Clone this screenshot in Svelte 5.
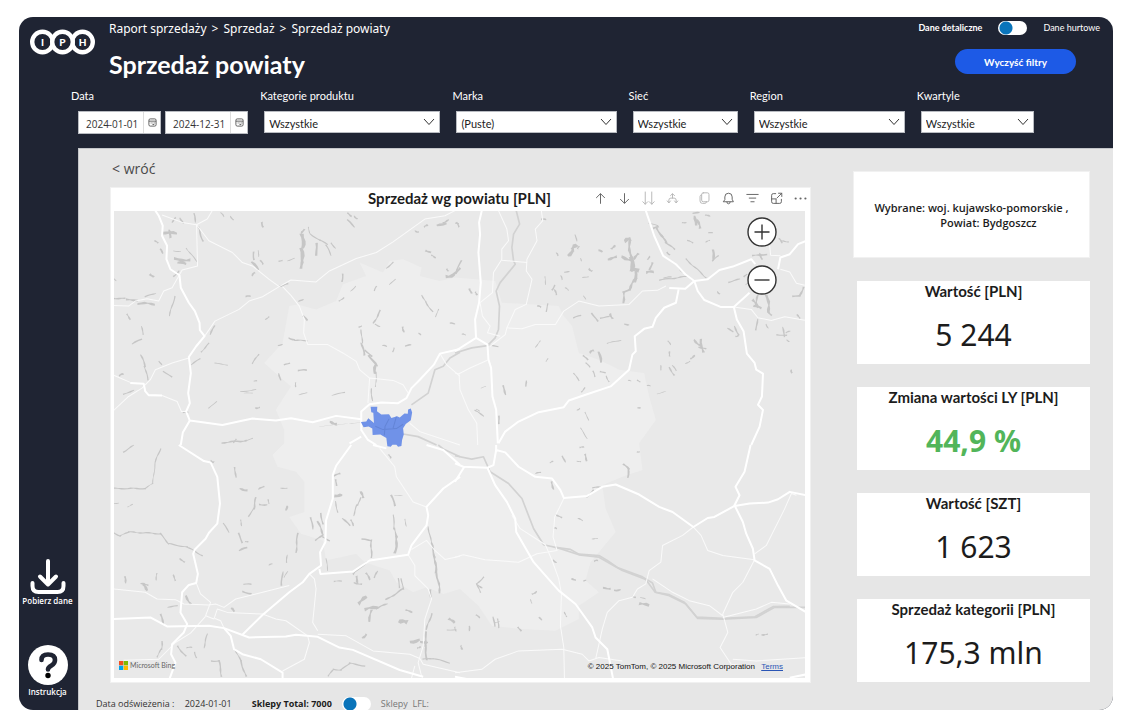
<script>
  const filters = [
    { id: 'category', label: 'Kategorie produktu', value: 'Wszystkie' },
    { id: 'brand', label: 'Marka', value: '(Puste)' },
    { id: 'chain', label: 'Sieć', value: 'Wszystkie' },
    { id: 'region', label: 'Region', value: 'Wszystkie' },
    { id: 'quarter', label: 'Kwartyle', value: 'Wszystkie' }
  ];

  const dates = [
    { id: 'from', label: 'Data od', value: '2024-01-01' },
    { id: 'to', label: 'Data do', value: '2024-12-31' }
  ];

  const kpis = [
    { label: 'Wartość [PLN]', value: '5 244' },
    { label: 'Zmiana wartości LY [PLN]', value: '44,9 %', up: true },
    { label: 'Wartość [SZT]', value: '1 623' },
    { label: 'Sprzedaż kategorii [PLN]', value: '175,3 mln' }
  ];

  const tools = [
    { name: 'Drąż w górę', d: 'M8 14V2.500M3 7l5-5 5 5' },
    { name: 'Drąż w dół', d: 'M8 2v11.500M3 9l5 5 5-5' },
    { name: 'Następny poziom', d: 'M4 0v15M1 12l3 3 3-3M12 0v15M9 12l3 3 3-3', faint: true },
    { name: 'Rozwiń poziom', d: 'M8 2.500v5M3.500 13v-3q0-2.500 2.500-2.500h4q2.500 0 2.500 2.500v3M5.500 4.500L8 2l2.500 2.500M1.500 11l2 2.500 2-2.500M10.500 11l2 2.500 2-2.500', faint: true },
    { name: 'Kopiuj', d: 'M6.500 1h5q2 0 2 2v7q0 2-2 2h-5q-2 0-2-2V3q0-2 2-2zM4.500 3.500Q2.500 3.500 2.500 5.500V11q0 3 3 3h3q2 0 2-2', faint: true, gap: true },
    { name: 'Alert', d: 'M2 12h12l-1.500-3V6a4.500 4.500 0 0 0-9 0v3zM6 12.500a2 2 0 0 0 4 0' },
    { name: 'Filtry', d: 'M1 3h14M4 7.500h8M6 12h4' },
    { name: 'Tryb koncentracji uwagi', d: 'M7 2H4Q2 2 2 4v8q0 2 2 2h8q2 0 2-2V9M2 8.500h5.500V14M8.500 7.500L14.500 1.500M10.500 1.500h4v4' },
    { name: 'Więcej opcji', d: 'M2 8h.1M8 8h.1M14 8h.1', bold: true }
  ];

  /* The map is drawn as four tiles; each one carries its own offset. */
  const tiles = [
    {
      x: 0, y: 0,
      major: [
        'M140 5L150 20 162 50 160 80 175 110 173 150 185 180 212 198 216 235 240 280 258 305 272 340 273 362 287 380 262 410 240 442 246 490 238 550 243 580 232 605 243 632 340 645 430 626 500 632 545 625 610 637 680 618 755 628',
        'M65 520L105 522 110 545 120 556 160 557',
        'M1050 418L990 432 972 465 930 510 905 535 890 565 865 580 815 578 780 583 755 605 755 660 775 690 800 705M755 680L720 700',
        'M243 632L222 668 216 705'
      ],
      minor: [
        'M160 18L220 40 263 47 295 30 310 5M263 47L266 170 220 182 190 235 165 245 150 275 115 268 80 275 60 290 12 288',
        'M263 47L300 95 370 130 400 160 430 170 455 190 480 210 510 232 545 212 620 218 660 185 740 148 800 130 850 98 945 30 1005 20 1035 5',
        'M510 232L460 262 420 275 390 300 318 335 287 380M520 232L545 258 570 290 585 330 583 370 595 405 655 405 700 430 740 455 750 480 780 505 775 580M780 505L850 512 880 525 895 550',
        'M240 445L190 460 140 480 125 510 100 535 60 560 12 605M12 495L65 518M160 557L205 575 218 605 235 605M990 432L1010 465 1050 500M900 640L930 665 1050 705'
      ],
      river: ['M1050 428L1020 445 1000 470 975 480 955 550 905 585M880 672L925 680 980 705'],
      lakes: [
        [165,70,200,74,9],[180,66,186,82,8],[200,150,240,152,9],[210,160,228,164,8],[233,118,265,158,3],[195,125,215,127,3],[155,122,162,130,6],[140,95,146,101,5],
        [255,15,260,38,5],[268,55,282,95,5],[215,28,222,42,5],[190,38,200,28,5],[127,196,132,202,7],[195,200,210,186,5],[13,266,48,268,5],[55,272,85,272,6],[90,282,135,284,7],[110,262,140,252,4],[13,203,22,214,3],
        [55,316,65,328,5],[198,262,182,318,4],[98,352,104,374,4],[72,402,98,390,5],[97,437,110,470,5],[108,470,118,510,4],[305,374,316,350,5],[277,426,300,402,4],[248,465,273,448,4],[318,461,355,466,3],[430,461,448,435,4],
        [433,130,435,150,5],[430,160,445,180,8],[430,198,436,192,6],[448,125,448,142,3],[458,42,462,52,6],[455,155,460,164,5],[336,12,344,22,4],[365,22,372,32,4],[510,155,518,155,4],[535,154,555,148,3],
        [580,80,580,112,12],[575,122,578,148,12],[576,154,577,174,9],[598,55,600,72,3],[603,75,632,94,4],[632,94,654,105,4],[650,108,665,138,4],[665,103,678,116,4],[620,105,622,136,7],[583,62,578,72,6],
        [715,14,725,20,5],[714,34,734,52,5],[735,22,742,28,5],[917,66,925,68,5],[945,52,952,50,6],[985,50,1005,42,8],[1000,40,1015,34,5],[1040,42,1046,52,5],[950,124,960,130,6],[966,140,976,144,5],
        [700,196,697,215,5],[723,245,738,232,3],[830,176,850,160,4],[795,243,800,232,4],[840,226,856,210,3],[690,275,702,265,4],[1012,200,1030,198,10],[1030,195,1048,178,7],[1012,180,1014,184,5],
        [937,258,948,278,4],[948,280,968,306,4],[812,304,792,340,5],[797,345,810,350,4],[985,300,978,322,3],[1022,342,1033,342,5],[880,354,882,366,6],[928,373,932,374,5],[888,408,902,407,5],[820,408,830,410,4],
        [748,352,755,350,4],[755,362,758,400,4],[756,402,764,435,6],[768,422,785,440,5],[780,438,800,468,7],[798,468,796,488,9],[800,488,798,530,3],[785,538,788,572,4],[852,416,850,426,4],
        [540,386,555,390,5],[556,393,592,393,4],[508,408,518,404,4],[470,330,478,322,4],[526,466,540,460,4],[568,482,590,482,5],[510,493,513,510,5],[165,485,188,502,4],[152,455,158,465,4],[35,498,42,493,6],
        [395,546,440,540,3],[405,550,430,550,2],[436,514,442,514,4],[300,595,322,575,3],[558,520,560,530,4],[570,556,592,548,3],[668,556,705,548,3],[665,638,678,640,9],[630,650,752,638,1],[45,552,75,543,4],[582,322,593,330,6],[440,594,450,593,5],
        [340,698,410,692,5],[410,692,430,686,3],[375,698,380,688,4],[570,276,580,270,5],[510,230,535,224,5],[412,262,422,260,5],[225,608,235,606,6]
      ]
    },
    {
      x: 1035, y: 0,
      major: [
        'M80 5L72 40 75 75 70 130 77 220 72 280 60 330 63 385 0 425M63 385L97 405 100 450 108 475 112 560 123 600 128 700',
        'M570 5L582 40 595 80 622 140 660 165 688 195 715 215 725 245 745 272 795 293 833 293 880 250',
        'M640 236L688 238 715 215 755 210 790 182 830 172 885 150 897 165M965 180L972 145 1000 135 1025 105 1050 95',
        'M833 293L842 330 862 365 872 432 895 460 900 480 920 492 917 560 905 585 920 600 910 650 885 705',
        'M668 240L660 280 625 295 600 325 590 352 565 358 537 380 540 425 530 435 520 480 465 530 390 555 340 572 325 592 250 607 190 635 150 665 130 700'
      ],
      minor: [
        'M130 5L155 60 160 95 140 120 140 150 115 190 112 250 75 280 82 320 105 350 97 370 135 380M140 153L215 160M258 5L262 35 240 60 245 95 215 150 213 185 230 210 213 285 180 300 155 355 200 358 240 345 300 345 325 305 370 275 430 290 520 285 560 245 605 243 630 230',
        'M155 355L150 375 105 410M97 452L45 475 12 492 15 540 40 600 65 640 68 705M0 490L12 492M833 293L885 300 905 325 945 333 985 322 1050 333M940 110L943 138 972 140M972 180L1000 188 1020 222 1045 228'
      ],
      river: ['M183 5L193 45 175 75 170 115 175 155 180 165 135 220 123 245 133 290 130 360 120 385 97 408 50 415 0 430'],
      lakes: [
        [360,78,363,95,4],[355,118,360,112,13],[340,135,350,128,11],[368,118,370,113,5],[304,132,306,138,5],[512,95,520,92,12],[520,95,525,140,8],[502,145,525,150,10],[525,150,530,180,14],[530,180,543,185,12],[538,188,540,215,9],[540,208,522,238,8],[520,240,505,250,6],[505,250,502,278,7],
        [538,148,545,135,8],[460,148,480,145,8],[470,118,475,110,7],[432,125,438,125,7],[575,190,590,188,8],[583,180,588,162,6],[577,150,580,142,5],[402,180,408,184,6],[382,205,398,202,3],[328,188,340,188,4],[375,150,378,154,4],[18,155,3,192,5],
        [268,203,271,225,3],[290,240,298,230,5],[298,242,302,255,5],[320,210,316,200,4],[330,236,338,242,4],[45,240,48,250,6],[62,250,66,254,6],[278,284,272,305,4],[248,290,255,293,5],[385,260,390,270,3],
        [612,212,690,202,4],[625,206,645,203,4],[595,58,605,52,6],[603,58,620,82,6],[618,80,630,100,6],[630,100,655,120,5],[635,130,640,136,5],[690,150,750,205,4],[665,172,680,188,5],[580,42,605,50,3],
        [712,12,728,12,5],[718,25,718,45,9],[725,35,730,55,8],[680,40,690,42,4],[750,18,760,22,5],[695,95,710,100,4],[758,72,768,70,4],[750,98,760,95,4],[770,125,772,150,8],[770,155,786,140,4],[890,140,930,135,5],[910,135,918,148,6],[970,90,975,100,6],[980,95,995,98,4],
        [865,202,870,196,5],[818,218,850,210,4],[785,248,790,252,5],[870,225,880,222,4],[890,275,905,290,8],[905,258,900,285,6],[895,290,912,296,7],[932,260,938,305,9],[935,308,945,315,6],[1010,262,1030,258,5],[1030,258,1040,235,6],[1022,318,1030,325,5],
        [903,330,900,360,5],[930,345,935,355,4],[978,355,985,380,5],[962,375,990,378,4],[990,370,1000,365,4],[992,392,998,395,4],[815,358,830,365,5],[835,352,848,375,5],[845,378,840,380,5],[716,393,730,405,7],[735,392,740,425,8],[730,412,748,418,5],[637,395,643,405,4],[642,428,640,438,5],
        [690,462,700,455,4],[705,445,715,440,6],[614,468,616,480,4],[640,475,655,495,5],[650,468,660,482,4],[1004,484,1006,486,7],[604,552,630,545,2],[548,593,552,595,5],[545,513,552,515,4],[518,512,525,514,3],[575,528,582,528,4],
        [455,401,495,392,3],[465,315,470,325,7],[435,325,460,322,4],[410,312,425,335,5],[355,325,375,318,4],[508,345,518,345,5],[405,428,412,424,7],[430,430,435,455,8],[385,438,395,450,5],[392,460,402,472,4],[355,492,370,512,4],[412,485,418,500,4],[435,485,448,490,4],[378,545,388,535,4],[452,500,460,515,4],
        [240,412,255,395,3],[272,454,278,448,3],[212,515,213,528,5],[143,530,152,552,6],[60,602,85,618,4],[65,598,72,604,3],[78,535,92,530,2],[130,620,132,640,5],[375,655,395,685,3],[388,608,400,630,3],[365,600,372,597,4],[22,374,30,376,4],[105,408,128,410,4],[260,30,270,32,5],[2,42,10,44,3]
      ]
    },
    {
      x: 0, y: 705,
      major: [
        'M210 0L285 48 305 52 325 95 333 175 325 235 300 262 290 280 258 312 253 325 267 385 262 412 240 418 220 440 215 500 235 535 225 560 190 595 187 625 200 650 183 697',
        'M12 520L125 515 175 542 300 540 345 547 420 575 530 572 560 567 625 573 690 605 730 612 870 672 940 692',
        'M725 0L680 62 670 90 670 160 650 225 648 290 632 320 635 360 600 385 580 410 540 440 460 508 400 567',
        'M345 547L365 570 375 610 400 625 455 640 520 680 520 697M630 370L633 385 730 378 780 345 895 328 905 300 950 240 955 210 950 185 1000 130 1050 95M790 0L830 10M950 0L1000 15 1050 60'
      ],
      minor: [
        'M12 430L110 440 145 460 200 462 225 475 300 478 320 475 345 485 380 460 440 445 540 420M262 412L275 445 305 470 290 510 315 520 325 490 355 500 460 505 500 520 530 525 595 570 600 590 585 640 520 675',
        'M318 518L335 525 345 547M290 512L245 562 200 590 150 640 45 643M600 385L615 400 620 430 610 530 625 555M625 565L710 570 790 615 900 625 930 638 940 655 1050 680',
        'M810 10L855 65 860 95 910 170 950 185M895 328L915 360 915 390 955 430 965 460 945 520 940 600 925 650 935 690M905 312L950 285 975 315 1005 342 1050 332M915 660L905 697'
      ],
      river: ['M1050 35L1000 12 985 0'],
      lakes: [
        [45,20,75,2,4],[155,12,140,50,4],[140,50,132,115,3],[132,115,110,130,3],[110,130,12,130,4],[12,260,35,272,4],[35,272,60,260,4],[60,260,155,265,4],[155,265,180,295,4],[180,295,235,305,4],[235,305,280,330,4],
        [12,175,30,173,3],[58,184,72,178,3],[378,68,380,95,5],[395,132,412,134,7],[450,132,463,124,5],[515,129,533,129,3],[452,178,472,178,5],[440,158,435,190,5],[435,190,418,212,4],[532,185,532,192,7],[476,164,480,173,4],
        [343,235,360,260,4],[388,265,400,290,5],[394,225,398,240,4],[410,288,416,290,4],[392,314,412,308,6],[565,265,560,320,5],[534,330,532,350,4],[480,358,488,356,4],[308,48,312,50,7],[605,218,610,250,5],[625,230,640,265,6],[635,205,640,235,5],
        [620,285,640,268,5],[640,275,660,285,4],[676,92,690,85,5],[680,105,680,120,5],[680,150,693,152,10],[678,170,685,200,4],[756,142,758,155,8],[752,158,745,180,4],[742,180,732,210,4],[700,220,720,240,5],[725,225,730,240,5],
        [845,152,855,180,6],[855,150,878,150,2],[885,222,890,242,3],[851,210,853,250,4],[853,250,862,275,5],[862,275,856,320,8],[758,282,785,285,5],[785,285,785,335,5],[838,30,842,38,5],[215,340,225,350,5],[145,385,142,402,4],[193,390,200,403,5],[48,395,52,410,6],[105,420,115,430,9],[98,415,117,418,5],
        [178,484,205,481,4],[232,453,245,472,7],[155,508,165,532,6],[402,438,425,444,5],[405,416,425,416,4],[520,380,517,418,5],[368,490,374,495,7],[525,395,535,378,3],[160,588,158,610,5],[158,610,145,632,4],[207,602,230,630,5],[235,605,248,605,4],
        [258,620,262,635,4],[295,565,285,605,4],[308,645,330,645,4],[330,645,338,690,5],[378,610,395,645,4],[395,645,410,690,5],[657,690,672,670,4],[672,670,695,672,4],[695,672,720,652,4],[720,652,765,660,4],
        [675,407,695,407,4],[732,385,770,350,5],[740,395,745,410,7],[735,412,755,415,5],[770,385,780,400,6],[795,395,803,378,5],[875,400,880,430,4],[880,430,830,462,5],[750,470,768,458,11],[770,492,800,485,10],[785,495,780,525,7],[800,488,832,475,5],
        [875,525,885,530,14],[890,495,905,498,6],[760,575,768,567,7],[905,587,925,583,10],[935,590,950,588,8],[925,605,930,605,6],[950,560,945,600,6],[965,505,950,550,5],[948,600,950,640,6],[940,640,970,638,4],[970,638,1018,650,4],
        [1020,520,1030,530,8],[1012,552,1038,552,3],[955,245,965,295,4],[965,295,975,335,6],[975,335,978,380,7],[980,380,990,440,6],[960,435,964,452,6],[650,340,655,375,3],[865,400,870,425,4]
      ]
    },
    {
      x: 1035, y: 705,
      major: [
        'M0 55L25 65 97 68 115 60 123 15 150 22 190 65 240 95 290 100 315 135 325 158 395 152 440 125 480 118 550 148 610 185 650 200 712 245 755 218 775 215 835 182',
        'M97 68L120 120 155 170 180 220 183 260 235 350 310 435 360 475 410 545 420 575 455 610 472 697',
        'M883 0L865 80 838 125 850 150 835 180 860 230 870 265 890 310 895 345 940 370 965 420 990 465 1050 500M835 182L880 175 935 172 965 162 1000 140 1050 150',
        'M123 0L123 20M0 110L28 65M0 692L40 700M1000 695L1050 685'
      ],
      minor: [
        'M0 335L25 328 90 343 190 350 245 325 305 315 293 275 298 215 325 160M170 210L195 250 270 298 290 345 310 400 318 445 315 540 325 605 327 697',
        'M0 680L80 670 120 640 190 615 320 610 380 625 400 645 430 635 500 645M712 245L680 270 620 300 615 350 580 375 570 415 545 430 530 455 490 465 455 500 440 550 420 640',
        'M712 245L735 270 755 315 800 330 895 343 860 410 830 440 800 505 815 560 792 605 825 655 860 660M590 400L650 440 700 465 760 480 800 510M895 325L930 300 985 190 1005 145 1020 150M800 515L900 490 945 470 1000 475M830 640L900 645 1050 635'
      ],
      river: [
        'M0 32L50 42 85 35 105 80 160 115 200 160 235 250 265 298 310 308 370 328 430 335 500 375 570 402 598 440 640 450 690 475 725 518 800 520 900 515 955 485 1050 485',
        'M300 306L345 312 370 326 430 330 455 345 485 366 560 394 590 412 600 440 640 447 685 470 722 514 800 518 896 513 950 483 1000 482'
      ],
      lakes: [
        [505,58,518,72,6],[518,72,516,95,6],[322,34,328,50,5],[285,52,292,50,4],[375,8,383,5,5],[388,30,394,45,6],[365,48,375,50,3],[545,22,550,20,4],[242,85,255,82,4],[288,112,295,130,6],[395,155,412,135,5],[412,128,435,125,4],
        [303,208,317,217,5],[298,248,302,250,5],[368,220,380,225,4],[410,280,425,280,3],[295,345,302,350,5],[350,402,358,402,6],[385,405,390,405,4],[445,428,462,428,6],[478,433,492,433,6],[533,454,538,454,5],[555,455,568,460,3],[555,473,575,480,9],[418,347,425,345,5],
        [85,395,65,415,4],[65,415,75,440,4],[68,420,80,425,5],[232,445,242,438,5],[225,462,230,472,3],[65,508,72,516,5],[115,515,118,540,5],[128,520,130,545,4],[120,530,132,528,3],[42,543,44,553,5],[0,545,3,555,4],[190,545,196,555,5],[253,515,257,522,5],[18,602,22,608,6],[328,500,332,512,4],[900,566,905,566,4],[918,566,932,566,5]
      ]
    }
  ];

  /* Turns a lake's axis and width into an uneven, tapering shoreline. */
  function shore([x1, y1, x2, y2, w]) {
    const length = Math.hypot(x2 - x1, y2 - y1) || 1;
    const ux = (x2 - x1) / length;
    const uy = (y2 - y1) / length;
    const steps = Math.max(3, Math.round(length / 9));
    const left = [];
    const right = [];
    for (let i = 0; i <= steps; i++) {
      const t = i / steps;
      const sway = Math.sin(x1 + i * 1.1) * w * 0.3;
      const half = w * (0.22 + 0.33 * Math.abs(Math.sin(y1 + i * 1.3)));
      const along = t * (length + w) - w / 2;
      const cx = x1 + ux * along - uy * sway;
      const cy = y1 + uy * along + ux * sway;
      left.push(`${(cx - uy * half).toFixed(1)} ${(cy + ux * half).toFixed(1)}`);
      right.unshift(`${(cx + uy * half).toFixed(1)} ${(cy - ux * half).toFixed(1)}`);
    }
    return `M${left.concat(right).join('L')}z`;
  }

  let wholesale = $state(false);
  let likeForLike = $state(false);
</script>

<div class="report">
  <header>
    <div class="top">
      <svg class="logo" viewBox="0 0 66 26" role="img" aria-label="IPH">
        <g fill="#1f2433" stroke="#fff" stroke-width="4.4">
          <circle cx="13" cy="13" r="10.3" /><circle cx="53" cy="13" r="10.3" /><circle cx="33" cy="13" r="10.3" />
        </g>
        <g fill="#fff" font-family="Lato, sans-serif" font-weight="900" font-size="10" text-anchor="middle">
          <text x="13" y="16.5">I</text><text x="33" y="16.5">P</text><text x="53" y="16.5">H</text>
        </g>
      </svg>
      <div class="heading">
        <nav aria-label="Ścieżka">
          <a href="#raport">Raport sprzedaży</a><span>&gt;</span><a href="#sprzedaz">Sprzedaż</a><span>&gt;</span><a href="#powiaty">Sprzedaż powiaty</a>
        </nav>
        <h1>Sprzedaż powiaty</h1>
      </div>
      <div class="actions">
        <div class="mode">
          <b>Dane detaliczne</b>
          <input class="switch" id="mode" type="checkbox" bind:checked={wholesale} />
          <label for="mode">Dane hurtowe</label>
        </div>
        <button class="clear">Wyczyść filtry</button>
      </div>
    </div>

    <div class="filters">
      <fieldset>
        <legend>Data</legend>
        <div class="dates">
          {#each dates as date}
            <div class="date">
              <input type="text" aria-label={date.label} value={date.value} />
              <button aria-label="Kalendarz">
                <svg viewBox="0 0 10 10" width="9" height="9"><rect x="1" y="1" width="8" height="8" rx="1.5" /><path d="M1 3.5h8M3 5.5h1M5 5.5h1M7 5.5h1M5 7.2h2" /></svg>
              </button>
            </div>
          {/each}
        </div>
      </fieldset>
      {#each filters as filter}
        <div class="filter">
          <label for={filter.id}>{filter.label}</label>
          <div class="select">
            <select id={filter.id}><option>{filter.value}</option></select>
            <svg viewBox="0 0 12 8" width="12" height="8"><path d="M1 1l5 5.5L11 1" /></svg>
          </div>
        </div>
      {/each}
    </div>
  </header>

  <div class="body">
    <aside>
      <button class="side">
        <svg viewBox="0 0 36 35" width="36" height="35"><path d="M18 2v23M10 17.500l8 8 8-8M2.500 24v3q0 6 6 6h19q6 0 6-6v-3" fill="none" stroke="#fff" stroke-width="4" stroke-linecap="round" stroke-linejoin="round" /></svg>
        Pobierz dane
      </button>
      <button class="side">
        <svg viewBox="0 0 40 40" width="40" height="40"><circle cx="20" cy="20" r="20" fill="#fff" /><path d="M13.500 15q0-5.500 6.500-5.500 7 0 7 5.500 0 3.500-3.500 5.500-3.500 2-3.500 4" fill="none" stroke="#1f2433" stroke-width="4.600" stroke-linecap="round" /><circle cx="20" cy="30.500" r="2.700" fill="#000" /></svg>
        Instrukcja
      </button>
    </aside>

    <main>
      <a class="back" href="#wroc">&lt; wróć</a>
      <div class="columns">
        <section class="mapcard">
          <div class="maphead">
            <h2>Sprzedaż wg powiatu [PLN]</h2>
            <div class="tools">
              {#each tools as tool}
                <button aria-label={tool.name} class:faint={tool.faint} class:gap={tool.gap} class:bold={tool.bold}>
                  <svg viewBox="0 0 16 16" width="13" height="13"><path d={tool.d} /></svg>
                </button>
              {/each}
            </div>
          </div>
          <div class="map">
            <svg class="tiles" viewBox="12 6 2073 1395" preserveAspectRatio="xMidYMid slice" role="img" aria-label="Mapa powiatów">
              <path class="land" d="M540 290L520 400 465 460 545 530 500 600 525 660 525 700 490 735 505 770 560 785 585 815 585 905 540 920 575 970 640 990 650 1050 740 1030 765 1055 840 1080 860 1115 910 1145 950 1130 1000 1150 1050 1135 1105 1185 1145 1245 1235 1255 1335 1260 1405 1225 1405 1185 1465 1145 1425 1110 1440 1055 1515 965 1485 895 1475 825 1535 800 1595 780 1585 700 1635 630 1615 560 1600 490 1525 480 1465 450 1405 430 1385 350 1360 320 1345 290 1175 280 1155 215 1035 205 990 215 930 200 935 175 880 150 840 155 820 190 750 160 770 200 700 225 680 275 620 300 565 285z" />
              {#each tiles as tile}
                <g transform="translate({tile.x} {tile.y})">
                  {#each tile.lakes as lake}<path class="lake" d={shore(lake)} />{/each}
                  {#each tile.river as d}<path class="river" {d} />{/each}
                  {#each tile.minor as d}<path class="minor" {d} />{/each}
                  {#each tile.major as d}<path class="major" {d} />{/each}
                </g>
              {/each}
              <path class="county" d="M783 591L803 591 802 604 815 614 838 613 845 624 862 619 870 623 884 611 894 612 895 599 903 596 907 608 903 631 888 642 880 655 882 674 877 690 875 708 865 710 860 704 848 704 843 710 833 709 830 684 812 674 789 675 788 656 777 650 762 652 754 636 770 635 776 625 793 639 791 609 785 607z" />
              <path class="shade" d="M797 649L820 659 860 656 880 643M838 627L826 650 824 676M860 620L850 655" />
            </svg>
            <div class="zoom">
              <button aria-label="Powiększ"><svg viewBox="0 0 30 30" width="30" height="30"><circle cx="15" cy="15" r="14" /><path d="M7.500 15h15M15 7.500v15" /></svg></button>
              <button aria-label="Pomniejsz"><svg viewBox="0 0 30 30" width="30" height="30"><circle cx="15" cy="15" r="14" /><path d="M7.500 15h15" /></svg></button>
            </div>
            <div class="credits">
              <span class="bing">
                <svg viewBox="0 0 9 9" width="9" height="9"><path fill="#f25022" d="M0 0h4.300v4.300H0z" /><path fill="#7fba00" d="M4.700 0H9v4.300H4.700z" /><path fill="#00a4ef" d="M0 4.700h4.300V9H0z" /><path fill="#ffb900" d="M4.700 4.700H9V9H4.700z" /></svg>
                Microsoft Bing
              </span>
              <span class="rights">© 2025 TomTom, © 2025 Microsoft Corporation <a href="#terms">Terms</a></span>
            </div>
          </div>
        </section>

        <section class="kpis">
          <p class="selection"><span>Wybrane: woj. kujawsko-pomorskie ,</span><span class="second">Powiat: Bydgoszcz</span></p>
          {#each kpis as kpi}
            <div class="kpi">
              <h3>{kpi.label}</h3>
              <strong class:up={kpi.up}>{kpi.value}</strong>
            </div>
          {/each}
        </section>
      </div>

      <footer>
        <span class="refresh">Data odświeżenia : <time>2024-01-01</time></span>
        <b>Sklepy Total: 7000</b>
        <input class="switch" id="lfl" type="checkbox" bind:checked={likeForLike} />
        <label for="lfl">Sklepy&nbsp; LFL:</label>
      </footer>
    </main>
  </div>
</div>

<style>
  :global(body) { margin: 0; background: #fff; }
  :global(*) { box-sizing: border-box; }
  .report {
    display: flex; flex-direction: column;
    min-height: calc(100vh - 35px);
    margin: 17px 21px 18px 19px;
    border-radius: 14px; overflow: hidden;
    background: #1f2433; color: #1c1c1c;
    font: 11px/14px "Open Sans", "Noto Sans", sans-serif;
  }
  button, input, select { font: inherit; color: inherit; }
  button { padding: 0; border: 0; background: none; }
  h1, h2, h3, p { margin: 0; }
  a { color: inherit; text-decoration: none; }

  header { color: #fff; padding-bottom: 14px; }
  .top { display: flex; padding: 4px 13px 0 10px; height: 72px; }
  .logo { width: 67px; height: 26px; margin-top: 8px; }
  .heading { flex: 1; padding-left: 13px; }
  nav { display: flex; gap: 5px; font-family: "Noto Sans", sans-serif; font-size: 12px; line-height: 16px; }
  h1 { margin-top: 10px; font: 700 25px/34px Lato, sans-serif; }
  .actions { display: flex; flex-direction: column; align-items: flex-end; gap: 14px; font-family: Lato, sans-serif; font-size: 10px; }
  .mode { display: flex; align-items: center; line-height: 14px; font-size: 9px; }
  .mode .switch { margin: 0 16px; }
  .switch {
    appearance: none; width: 29px; height: 14px; margin: 0; border-radius: 7px;
    background: radial-gradient(circle at 8px 7px, #0a74ba 6px, #fff 7px);
  }
  .switch:checked { background: radial-gradient(circle at 21px 7px, #0a74ba 6px, #fff 7px); }
  .clear { width: 121px; height: 25px; margin-right: 24px; border-radius: 13px; background: #1d5ae6; font-weight: 700; }

  .filters {
    display: grid; grid-template-columns: 177fr 180fr 164fr 109fr 155fr 117fr; gap: 12px;
    padding: 0 79px 0 52px; font-family: Lato, sans-serif; font-size: 11px;
  }
  fieldset { margin: 0; padding: 0; border: 0; min-width: 0; }
  legend, .filter label { display: block; padding: 0; height: 22px; line-height: 14px; }
  .dates { display: flex; gap: 4px; padding-left: 7px; }
  .date { display: flex; flex: 1; min-width: 0; height: 23px; background: #fff; border: 1px solid #b9bcc2; color: #333; }
  .date input { flex: 1; width: 0; min-width: 0; border: 0; padding: 2px 0 0 7px; background: none; font: 10px "Open Sans", sans-serif; }
  .date button { width: 17px; border-left: 1px solid #ddd; }
  .date svg { fill: none; stroke: #555; stroke-width: 1; display: block; margin: 0 auto; }
  .select { display: grid; grid-template: 22px / 1fr; margin-left: 4px; color: #222; }
  select { grid-area: 1 / 1; width: 100%; appearance: none; border: 1px solid #b9bcc2; border-radius: 0; background: #fff; padding: 3px 20px 0 4px; }
  .select svg { grid-area: 1 / 1; place-self: center end; margin-right: 5px; fill: none; stroke: #333; stroke-width: 1; pointer-events: none; }

  .body { display: flex; flex: 1; }
  aside { width: 57px; margin-right: 2px; flex: none; display: flex; flex-direction: column; justify-content: flex-end; gap: 37px; padding-bottom: 11px; }
  .side { display: flex; flex-direction: column; align-items: center; color: #fff; font-size: 8px; font-weight: 600; line-height: 14px; white-space: nowrap; }

  main { flex: 1; min-width: 0; display: flex; flex-direction: column; background: #e6e6e6; border-top: 1px solid #c4c6ca; border-left: 1px solid #c4c6ca; }
  .back { padding: 10px 0 0 33px; font-size: 14px; line-height: 20px; color: #4a4a4a; align-self: flex-start; }
  .columns { flex: 1; display: flex; gap: 42px; padding-left: 31px; padding-right: 23px; }
  .mapcard { flex: 1; min-width: 0; display: flex; flex-direction: column; margin-top: 8px; padding: 0 5px 4px 3px; background: #fff; border: 1px solid #f1f1f1; }
  .maphead { display: grid; height: 23px; }
  h2 { grid-area: 1 / 1; text-align: center; font: 700 15px/20px Lato, sans-serif; }
  .tools { grid-area: 1 / 1; justify-self: end; display: flex; gap: 11px; margin: 4px -2px 0 0; }
  .tools button { width: 13px; height: 13px; }
  .tools svg { display: block; fill: none; stroke: #666; stroke-width: 1.2; overflow: visible; stroke-linecap: round; }
  .tools .faint svg { stroke: #b8b8b8; }
  .tools .bold svg { stroke-width: 2.6; }
  .tools .gap { margin-left: 8px; }
  .map { position: relative; flex: 1; min-height: 465px; background: #e9e9e9; overflow: hidden; }
  .tiles { position: absolute; inset: 0; width: 100%; height: 100%; stroke-linecap: butt; stroke-linejoin: round; fill: none; }
  .land { fill: #eee; }
  .lake { fill: #c6c6c6; }
  .river { stroke: #d2d2d2; stroke-width: 5; }
  .minor { stroke: #fafafa; stroke-width: 3; }
  .major { stroke: #fff; stroke-width: 6; }
  .county { fill: #7092e8; }
  .shade { stroke: #6384d6; stroke-width: 3; }
  .zoom { position: absolute; top: 6px; right: 28px; display: grid; gap: 18px; }
  .zoom button { width: 30px; height: 30px; border-radius: 50%; }
  .zoom svg { display: block; fill: #fff; stroke: #333; stroke-width: 1.4; }
  .credits { position: absolute; left: 5px; right: 22px; bottom: 2px; display: flex; justify-content: space-between; align-items: center; font: 8px/14px "Liberation Sans", sans-serif; color: #111; }
  .bing { display: flex; align-items: center; gap: 2px; color: #666; font-family: Lato, sans-serif; font-size: 7px; margin-bottom: 4px; }
  .rights a { margin-left: 4px; color: #2a55b5; text-decoration: underline; }

  .kpis { flex: none; width: 237px; display: flex; flex-direction: column; gap: 23px; margin-top: -8px; }
  .selection { height: 87px; background: #fff; border: 1px solid #f1f1f1; display: flex; flex-direction: column; align-items: center; justify-content: center; font-size: 11px; font-weight: 600; line-height: 15px; }
  .second { padding-left: 34px; }
  .kpi { height: 83px; margin-left: 4px; background: #fff; text-align: center; }
  h3 { font: 700 15px/20px Lato, sans-serif; }
  strong { display: block; margin-top: 12px; font: 400 30px/44px "Noto Sans", sans-serif; }
  strong.up { color: #52b55a; font-weight: 700; }

  footer { display: flex; align-items: center; height: 27px; padding: 15px 0 0 17px; overflow: hidden; font-size: 9px; line-height: 14px; color: #333; }
  time { margin-left: 8px; }
  footer b { margin-left: 20px; color: #1c1c1c; }
  footer .switch { margin: 0 10px 0 10px; }
  footer label { color: #777; }
</style>
